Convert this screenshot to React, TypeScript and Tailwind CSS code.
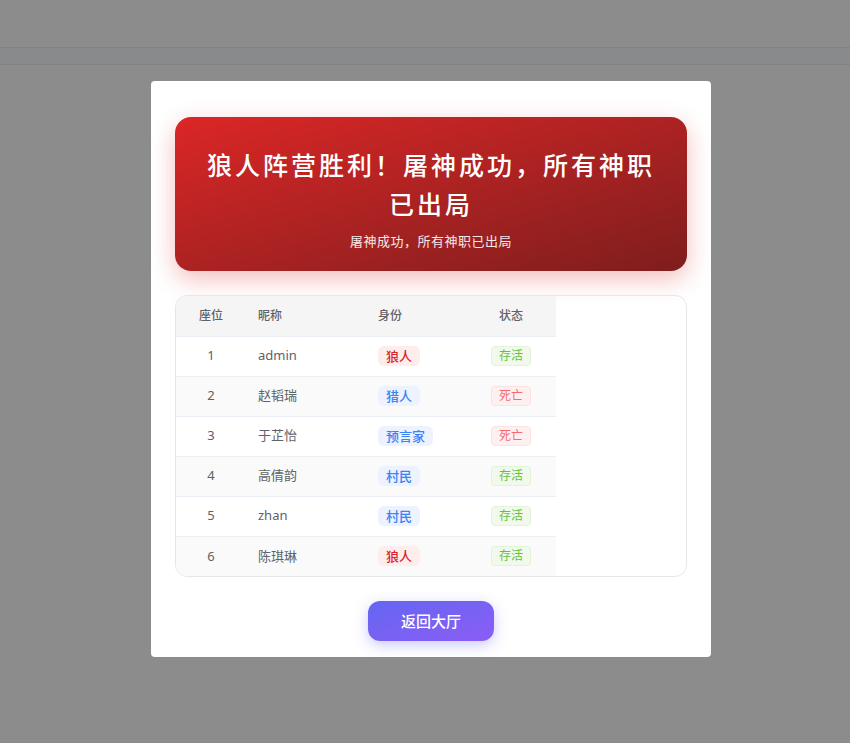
const players = [
  { seat: 1, name: 'admin', role: '狼人', wolf: true, alive: true },
  { seat: 2, name: '赵韬瑞', role: '猎人', wolf: false, alive: false },
  { seat: 3, name: '于芷怡', role: '预言家', wolf: false, alive: false },
  { seat: 4, name: '高倩韵', role: '村民', wolf: false, alive: true },
  { seat: 5, name: 'zhan', role: '村民', wolf: false, alive: true },
  { seat: 6, name: '陈琪琳', role: '狼人', wolf: true, alive: true },
];

export default function App() {
  return (
    <div
      className="flex h-[743px] w-full flex-col overflow-hidden bg-[#8c8c8c]"
      style={{ fontFamily: '"Noto Sans", "Noto Sans CJK SC", sans-serif' }}
    >
      <div className="h-[47px]" />
      <div className="h-[18px] border-y border-[#818283] bg-[#898a8c]" />

      <div className="flex justify-center pt-4 pl-3">
        <div className="w-[560px] rounded bg-white px-6 pt-9 pb-4">
          <div className="rounded-2xl bg-gradient-to-br from-[#dc2626] to-[#7f1d1d] px-7 pt-7 pb-5 text-center text-white shadow-[0_8px_24px_rgba(220,38,38,0.3)]">
            <h2
              className="text-[25px] leading-[39px] font-medium tracking-[3px]"
              style={{ fontFamily: '"Noto Sans CJK SC", sans-serif' }}
            >
              狼人阵营胜利！屠神成功，所有神职已出局
            </h2>
            <p className="mt-2 text-[13px] leading-5 tracking-[0.5px] text-white/90">
              屠神成功，所有神职已出局
            </p>
          </div>

          <div className="mt-6 overflow-hidden rounded-xl border border-[#e5e7eb]">
            <table className="w-[380px] border-collapse text-[13px]">
              <thead>
                <tr className="h-10 border-b border-[#ebeef5] bg-[#f5f5f6] text-xs text-[#606266]">
                  <th className="w-[70px] text-center font-medium">座位</th>
                  <th className="w-[120px] px-3 text-left font-medium">昵称</th>
                  <th className="w-[100px] px-3 text-left font-medium">身份</th>
                  <th className="w-[90px] text-center font-medium">状态</th>
                </tr>
              </thead>
              <tbody>
                {players.map((p, i) => (
                  <tr
                    key={p.seat}
                    className={`h-10 text-[#606266] ${i < players.length - 1 ? 'border-b border-[#ebeef5]' : ''} ${i % 2 === 1 ? 'bg-[#fafafa]' : 'bg-white'}`}
                  >
                    <td className="text-center">{p.seat}</td>
                    <td className="px-3">{p.name}</td>
                    <td className="px-3">
                      <span
                        className={`inline-block rounded-md px-2 text-[13px] leading-5 font-medium ${p.wolf ? 'bg-[#fdeded] text-[#dc2626]' : 'bg-[#ecf3fe] text-[#3b82f6]'}`}
                      >
                        {p.role}
                      </span>
                    </td>
                    <td className="text-center">
                      <span
                        className={`inline-block rounded border px-[7px] text-xs leading-[18px] ${p.alive ? 'border-[#e1f3d8] bg-[#f0f9eb] text-[#67c23a]' : 'border-[#fde2e2] bg-[#fef0f0] text-[#f56c6c]'}`}
                      >
                        {p.alive ? '存活' : '死亡'}
                      </span>
                    </td>
                  </tr>
                ))}
              </tbody>
            </table>
          </div>

          <div className="mt-6 flex justify-center">
            <button
              className="h-10 w-[126px] rounded-xl bg-gradient-to-br from-[#6366f1] to-[#8b5cf6] text-[15px] font-medium text-white shadow-[0_4px_14px_rgba(99,102,241,0.35)]"
              style={{ fontFamily: '"Noto Sans CJK SC", sans-serif' }}
            >
              返回大厅
            </button>
          </div>
        </div>
      </div>
    </div>
  );
}
